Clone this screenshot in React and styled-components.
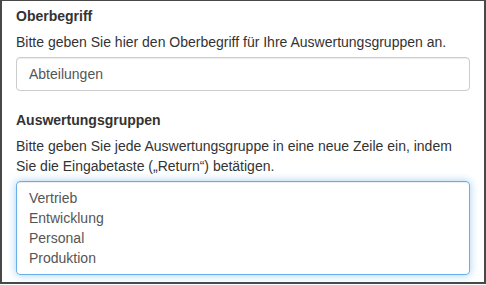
import React from "react";
import styled, { createGlobalStyle } from "styled-components";

const Global = createGlobalStyle`
  html, body { margin: 0; padding: 0; background: #fff; }
  body { font-family: "Liberation Sans", Arial, sans-serif; font-size: 14px; line-height: 20px; color: #333; }
  * { box-sizing: border-box; }
`;

const Frame = styled.div`
  width: 486px;
  height: 284px;
  border: 2px solid #484848;
  border-top-width: 1px;
  padding: 5px 14px 0 14px;
  display: flex;
  flex-direction: column;
  background: #fff;
`;

const Group = styled.div`
  display: flex;
  flex-direction: column;
  margin-bottom: ${(p) => p.$mb || 0}px;
`;

const Label = styled.label`
  font-weight: bold;
  color: #333;
  margin-bottom: 6px;
`;

const Help = styled.div`
  color: #333;
  margin-bottom: 5px;
`;

const Input = styled.div`
  height: 34px;
  padding: 6px 12px;
  border: 1px solid #ccc;
  border-radius: 4px;
  color: #555;
  box-shadow: inset 0 1px 1px rgba(0, 0, 0, 0.075);
`;

const TextArea = styled.div`
  padding: 6px 12px;
  border: 1px solid #66afe9;
  border-radius: 4px;
  color: #555;
  box-shadow: inset 0 1px 1px rgba(0, 0, 0, 0.075), 0 0 8px rgba(102, 175, 233, 0.6);
  display: flex;
  flex-direction: column;
`;

export default function App() {
  return (
    <>
      <Global />
      <Frame>
        <Group $mb={19}>
          <Label>Oberbegriff</Label>
          <Help>Bitte geben Sie hier den Oberbegriff für Ihre Auswertungsgruppen an.</Help>
          <Input>Abteilungen</Input>
        </Group>
        <Group>
          <Label>Auswertungsgruppen</Label>
          <Help>
            Bitte geben Sie jede Auswertungsgruppe in eine neue Zeile ein, indem Sie die Eingabetaste („Return“) betätigen.
          </Help>
          <TextArea>
            <span>Vertrieb</span>
            <span>Entwicklung</span>
            <span>Personal</span>
            <span>Produktion</span>
          </TextArea>
        </Group>
      </Frame>
    </>
  );
}
